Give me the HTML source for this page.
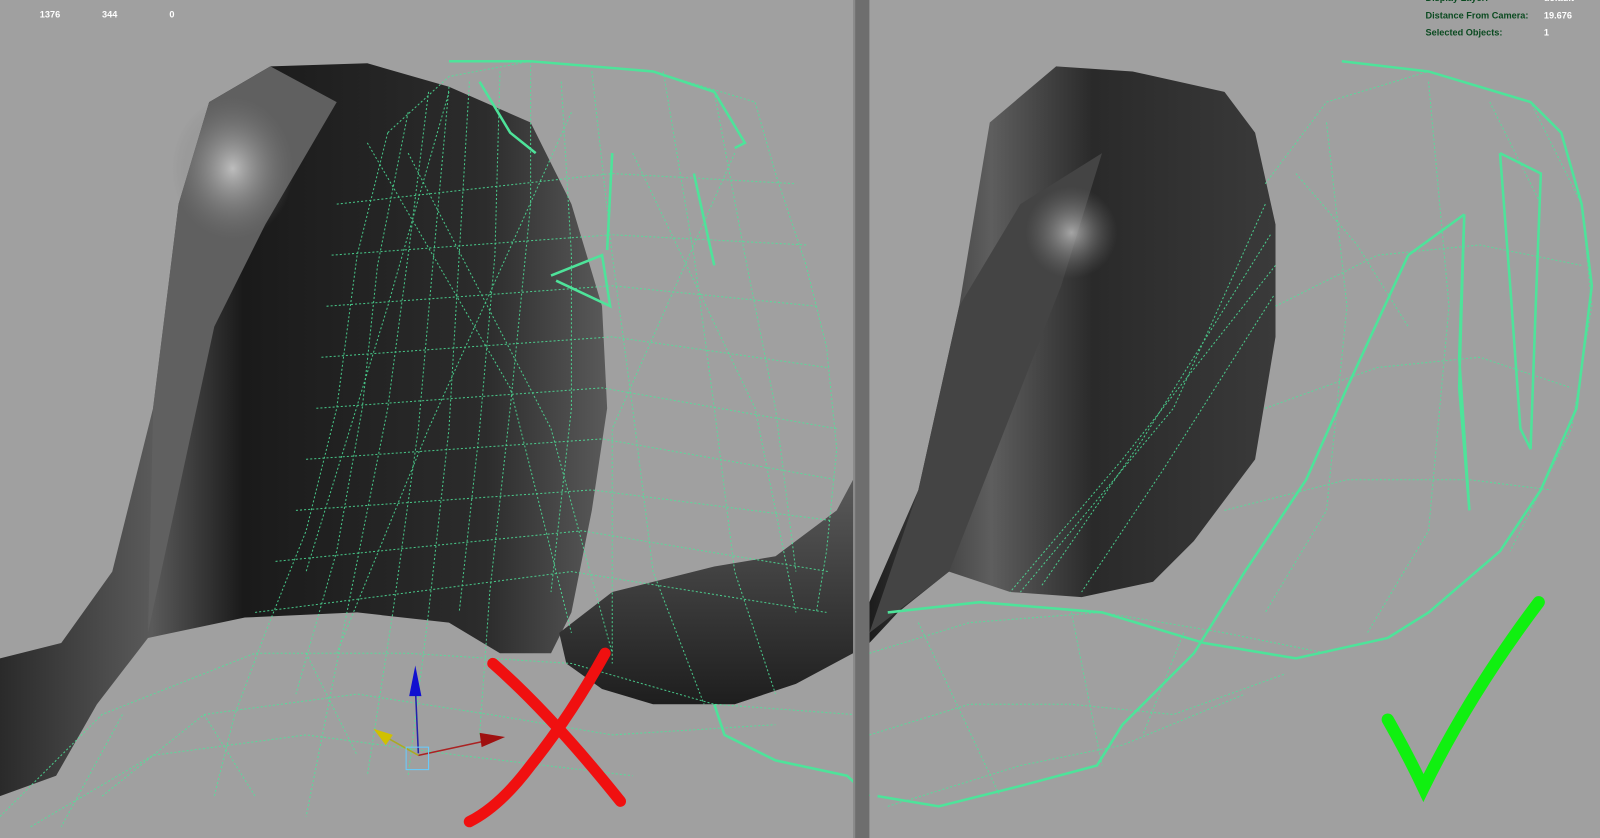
<!DOCTYPE html>
<html><head><meta charset="utf-8"><style>
html,body{margin:0;padding:0;background:#a0a0a0;overflow:hidden}
svg{display:block}
</style></head><body>
<svg width="1600" height="838" viewBox="0 0 1568 821" preserveAspectRatio="none" xmlns="http://www.w3.org/2000/svg">
<defs>
<linearGradient id="g1" x1="0" y1="0" x2="1" y2="0">
<stop offset="0" stop-color="#2a2a2a"/><stop offset="0.25" stop-color="#5a5a5a"/><stop offset="0.4" stop-color="#1a1a1a"/><stop offset="0.8" stop-color="#2c2c2c"/><stop offset="1" stop-color="#5a5a5a"/>
</linearGradient>
<radialGradient id="hl" cx="0.5" cy="0.5" r="0.5"><stop offset="0" stop-color="#bdbdbd"/><stop offset="1" stop-color="#777" stop-opacity="0"/></radialGradient>
<linearGradient id="g2" x1="0" y1="0" x2="1" y2="0">
<stop offset="0" stop-color="#1c1c1c"/><stop offset="0.3" stop-color="#5e5e5e"/><stop offset="0.55" stop-color="#2a2a2a"/><stop offset="1" stop-color="#3a3a3a"/>
</linearGradient>
<linearGradient id="arm" x1="0" y1="0" x2="0" y2="1">
<stop offset="0" stop-color="#5a5a5a"/><stop offset="1" stop-color="#1e1e1e"/>
</linearGradient>
</defs>
<rect width="1568" height="821" fill="#a0a0a0"/>
<path d="M0 645 L60 630 L110 560 L150 400 L175 200 L205 100 L265 65 L360 62 L440 85 L520 120 L560 200 L590 300 L595 400 L580 500 L560 600 L540 640 L490 640 L440 610 L350 600 L240 605 L145 625 L95 690 L55 760 L0 780 Z" fill="url(#g1)"/>
<path d="M150 400 L175 200 L205 100 L265 65 L330 100 L260 220 L210 320 L145 620 Z" fill="#606060"/>
<ellipse cx="228" cy="165" rx="60" ry="70" fill="url(#hl)"/>
<path d="M548 620 L600 580 L700 555 L760 545 L820 500 L836 470 L836 640 L780 670 L720 690 L640 690 L590 675 L555 650 Z" fill="url(#arm)"/>
<path d="M852 590 L900 480 L940 300 L970 120 L1035 65 L1110 70 L1200 90 L1230 130 L1250 220 L1250 330 L1230 450 L1170 530 L1130 570 L1060 585 L990 580 L930 560 L880 600 L852 630 Z" fill="url(#g2)"/>
<path d="M852 620 L900 480 L940 300 L1000 200 L1080 150 L1040 280 L930 560 Z" fill="#444"/>
<ellipse cx="1050" cy="228" rx="45" ry="45" fill="url(#hl)" opacity="0.8"/>
<g stroke="#4ee39a" fill="none" stroke-width="1" stroke-dasharray="2 2" opacity="0.85">
<path d="M380 130 L440 75 L520 60 L640 70 L740 100 L760 170 L790 260 L810 340 L820 440 L810 540 L800 600"/>
<path d="M380 130 L350 250 L330 400 L300 520 L260 620 L230 700 L210 780"/>
<path d="M400 110 L370 260 L355 400 L330 540 L290 680"/>
<path d="M420 90 L400 250 L380 400 L350 550 L320 700 L300 800"/>
<path d="M440 85 L425 250 L410 420 L385 600 L360 760"/>
<path d="M460 80 L450 250 L440 420 L420 600 L400 760"/>
<path d="M490 70 L485 250 L470 420 L450 600"/>
<path d="M520 60 L520 200 L500 400 L480 580 L470 720"/>
<path d="M550 80 L560 250 L560 400 L540 580"/>
<path d="M580 70 L600 250 L620 400 L640 560 L690 690"/>
<path d="M650 70 L680 250 L700 400 L720 560 L760 680"/>
<path d="M700 90 L730 250 L760 400 L780 560"/>
<path d="M330 200 L600 170 L780 180"/><path d="M325 250 L600 230 L790 240"/><path d="M320 300 L600 280 L800 300"/><path d="M315 350 L600 330 L810 360"/><path d="M310 400 L590 380 L820 420"/>
<path d="M300 450 L590 430 L820 470"/><path d="M290 500 L580 480 L815 510"/><path d="M270 550 L570 520 L812 560"/><path d="M250 600 L560 560 L810 600"/>
<path d="M0 800 L100 700 L250 640 L400 640 L560 650 L700 690 L836 700"/>
<path d="M100 780 L200 700 L350 680 L480 700 L600 720 L760 710"/>
<path d="M30 810 L150 740 L300 720 L450 740 L620 760"/>
<path d="M360 140 L500 380 L560 620"/><path d="M560 110 L420 420 L330 640"/>
<path d="M440 90 L380 300 L300 560"/><path d="M400 150 L540 420 L600 640"/>
<path d="M620 150 L740 400 L780 600"/><path d="M720 150 L600 420 L600 650"/>
<path d="M200 700 L250 780"/><path d="M300 640 L350 740"/><path d="M120 700 L60 810"/>
</g>
<g stroke="#4ee39a" fill="none" stroke-width="2.5">
<path d="M440 60 L520 60 L640 70 L700 90 L730 140 L720 145"/>
<path d="M470 80 L500 130 L525 150"/>
<path d="M600 150 L595 245"/>
<path d="M540 270 L590 250 L598 300 L545 275"/>
<path d="M680 170 L700 260"/>
</g>
<g stroke="#4ee39a" fill="none" stroke-width="1" stroke-dasharray="2 2" opacity="0.85">
<path d="M1240 180 L1300 100 L1400 70 L1500 100 L1550 200 L1560 300 L1540 420 L1480 540"/>
<path d="M1250 300 L1350 250 L1450 240 L1550 260"/><path d="M1240 400 L1350 360 L1450 350 L1540 380"/>
<path d="M1200 500 L1320 470 L1440 470 L1520 480"/>
<path d="M1300 120 L1320 300 L1300 500 L1240 600"/><path d="M1400 80 L1420 300 L1400 520 L1340 620"/>
<path d="M1240 200 L1150 400 L1000 580"/><path d="M1250 260 L1100 450 L990 580"/>
<path d="M1245 230 L1120 430 L1020 575"/><path d="M1248 290 L1140 460 L1060 580"/>
<path d="M852 640 L950 610 L1080 600 L1200 620 L1300 640"/>
<path d="M852 720 L950 690 L1050 690 L1150 700 L1260 660"/>
<path d="M870 790 L1000 750 L1100 730 L1220 680"/>
<path d="M900 610 L980 780"/><path d="M1050 600 L1080 750"/><path d="M1160 620 L1120 720"/>
<path d="M1270 170 L1330 240 L1380 320"/><path d="M1460 100 L1510 200"/>
</g>
<g stroke="#4ee39a" fill="none" stroke-width="2.5">
<path d="M1315 60 L1400 70 L1500 100 L1530 130 L1550 200 L1560 280 L1545 400 L1510 480 L1470 540 L1400 600 L1360 625 L1270 645 L1180 630 L1080 600 L960 590 L870 600"/>
<path d="M1470 150 L1480 280 L1490 420 L1500 440 L1505 300 L1510 170 L1470 150"/>
<path d="M1435 210 L1430 350 L1440 500 L1430 380 L1435 210"/>
<path d="M1380 250 L1320 380 L1280 470 L1220 560 L1170 640 L1100 710 L1075 750 L1000 770 L920 790 L860 780"/>
<path d="M1380 250 L1435 210"/>
<path d="M700 690 L710 720 L760 745 L830 760 L852 780"/>
</g>
<g>
<line x1="410" y1="738" x2="407" y2="672" stroke="#2222aa" stroke-width="1.5"/>
<polygon points="401,682 407,652 413,682" fill="#1010d0"/>
<line x1="410" y1="740" x2="480" y2="725" stroke="#aa2222" stroke-width="1.5"/>
<polygon points="470,718 495,722 472,732" fill="#a01010"/>
<line x1="410" y1="740" x2="378" y2="722" stroke="#aaaa22" stroke-width="1.5"/>
<polygon points="366,714 385,720 378,730" fill="#d0c000"/>
<rect x="398" y="732" width="22" height="22" fill="none" stroke="#66ccff" stroke-width="1"/>
</g>
<g stroke="#f01010" stroke-width="11" stroke-linecap="round" fill="none">
<path d="M483 650 Q540 700 608 785"/>
<path d="M593 640 Q560 700 520 750 Q490 790 460 805"/>
</g>
<path d="M1360 705 Q1380 740 1395 772 Q1440 680 1508 590" stroke="#10f010" stroke-width="12" stroke-linecap="round" fill="none"/>
<rect x="838" y="0" width="14" height="821" fill="#6e6e6e"/>
<rect x="836" y="0" width="2" height="821" fill="#8a8a8a"/>
<g font-family="Liberation Sans, sans-serif" font-size="9" font-weight="bold" fill="#ffffff">
<text x="40" y="-1">2972</text>
<text x="39" y="17">1376</text><text x="100" y="17">344</text><text x="166" y="17">0</text>
</g>
<g font-family="Liberation Sans, sans-serif" font-size="9" font-weight="bold">
<text x="1397" y="1" fill="#0a4a20">Display Layer:</text><text x="1513" y="1" fill="#fff">default</text>
<text x="1397" y="18" fill="#0a4a20">Distance From Camera:</text><text x="1513" y="18" fill="#fff">19.676</text>
<text x="1397" y="35" fill="#0a4a20">Selected Objects:</text><text x="1513" y="35" fill="#fff">1</text>
</g>
</svg>
</body></html>
